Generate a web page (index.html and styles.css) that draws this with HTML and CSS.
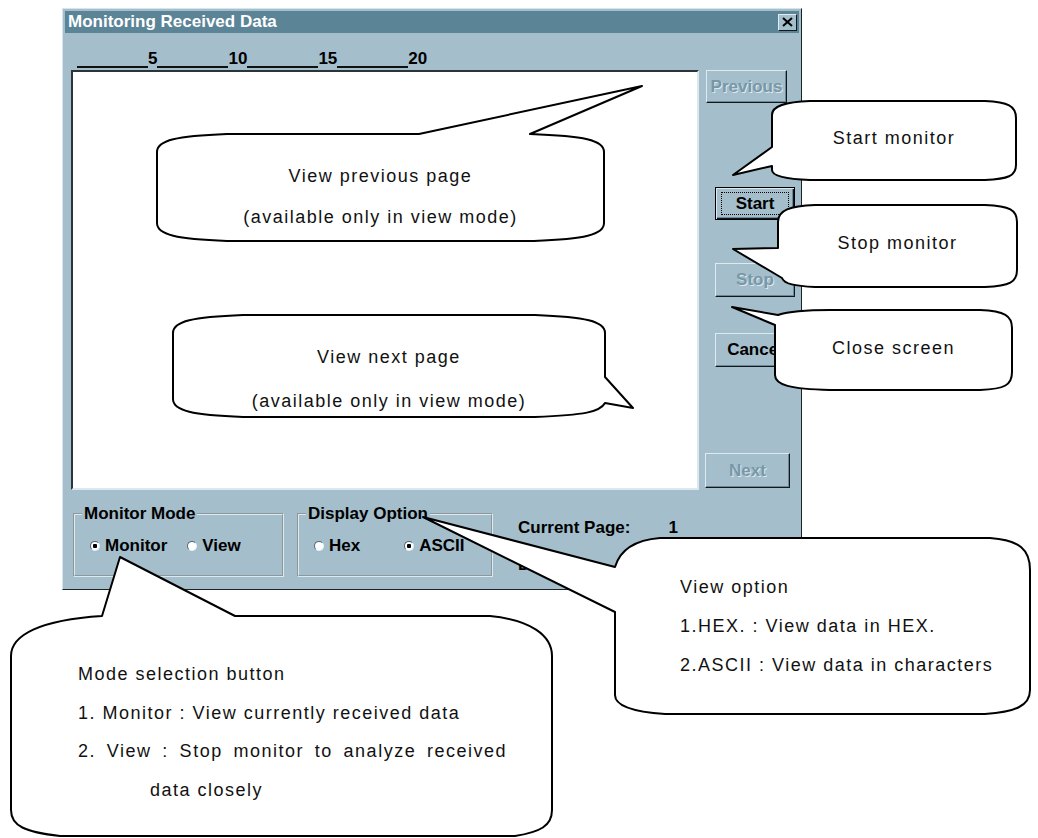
FILE: index.html
```html
<!doctype html>
<html>
<head>
<meta charset="utf-8" />
<title>Monitoring Received Data</title>
<link rel="stylesheet" href="styles.css">
</head>

<body>
<div class="dialog">
	<div class="titlebar">
		<span class="title">Monitoring Received Data</span>
		<span class="close"><svg width="11" height="10" viewBox="0 0 11 10"><path d="M1 1 L10 9 M10 1 L1 9" stroke="#000" stroke-width="2" /></svg></span>
	</div>
	<div class="ruler">
		<span class="seg"></span><b>5</b><span class="seg"></span><b>10</b><span class="seg"></span><b>15</b><span class="seg"></span><b>20</b>
	</div>
	<div class="main">
		<div class="screen"></div>
		<div class="buttons">
			<button class="btn off prev">Previous</button>
			<button class="btn def start"><span class="focus">Start</span></button>
			<button class="btn off stop">Stop</button>
			<button class="btn cancel">Cancel</button>
			<button class="btn off next">Next</button>
		</div>
	</div>
	<div class="bottom">
		<fieldset class="group mode">
			<legend>Monitor Mode</legend>
			<div class="opts">
				<label class="radio"><i class="dot on"></i>Monitor</label>
				<label class="radio view"><i class="dot"></i>View</label>
			</div>
		</fieldset>
		<fieldset class="group display">
			<legend>Display Option</legend>
			<div class="opts">
				<label class="radio"><i class="dot"></i>Hex</label>
				<label class="radio ascii"><i class="dot on"></i>ASCII</label>
			</div>
		</fieldset>
		<div class="pageinfo">
			<div class="row"><span>Current Page:</span><span class="val">1</span></div>
			<div class="row second"><span>Data:</span></div>
		</div>
	</div>
</div>

<!-- callout balloons over the dialog -->
<svg class="balloons" width="1038" height="838" viewBox="0 0 1038 838">
	<path d="M 227 134 L 419 134 L 642 86 L 530 134 C 584 136 604 140 604 152 L 604 223 C 604 235 584 239 534 241 L 227 241 C 177 239 157 235 157 223 L 157 152 C 157 140 177 136 227 134 Z" />
	<path d="M 243 315 L 535 315 C 585 317 605 321 605 333 L 605 377 L 633 408 L 605 403 C 600 412 585 415 535 417 L 243 417 C 193 415 173 411 173 399 L 173 333 C 173 321 193 317 243 315 Z" />
	<path d="M 810 101 L 985 101 C 1008 102 1016 106 1016 118 L 1016 165 C 1016 176 1008 179 985 180 L 810 180 C 785 179 772 176 772 170 L 772 166 L 733 175 L 772 147 L 772 115 C 772 106 785 102 810 101 Z" />
	<path d="M 815 205 L 985 205 C 1010 206 1017 210 1017 222 L 1017 270 C 1017 282 1010 286 985 287 L 815 287 C 795 286 784 284 782 278 L 733 249 L 778 248 L 778 222 C 778 210 790 206 815 205 Z" />
	<path d="M 830 310 L 980 310 C 1005 311 1012 316 1012 328 L 1012 372 C 1012 385 1005 389 980 390 L 830 390 C 790 389 775 385 775 375 L 775 325 L 732 307 L 778 315 C 790 311 805 310 830 310 Z" />
	<path d="M 660 538 L 990 538 C 1020 540 1030 550 1030 570 L 1030 690 C 1030 706 1015 712 985 714 L 665 714 C 635 712 615 706 615 695 L 615 612 L 423 517 L 615 567 C 620 550 635 540 660 538 Z" />
	<path d="M 102 616 L 120 557 L 235 616 L 490 616 C 530 620 552 635 552 656 L 552 810 C 552 826 540 832 515 836 L 60 836 C 25 832 11 826 11 810 L 11 656 C 11 635 40 620 102 616 Z" />
</svg>

<div class="note center n-prev">View previous page<br />(available only in view mode)</div>
<div class="note center n-next">View next page<br />(available only in view mode)</div>
<div class="note center n-start">Start monitor</div>
<div class="note center n-stop">Stop monitor</div>
<div class="note center n-close">Close screen</div>
<div class="note n-option">View option<br />1.HEX. : View data in HEX.<br />2.ASCII : View data in characters</div>
<div class="note n-mode">
	<div>Mode selection button</div>
	<div>1. Monitor : View currently received data</div>
	<div class="just">2. View : Stop monitor to analyze received</div>
	<div class="indent">data closely</div>
</div>
</body>
</html>
```

FILE: styles.css
```css
body { margin:0; background:#fff; width:1038px; height:838px; overflow:hidden; position:relative; }

.dialog { width:740px; height:582px; margin:8px 0 0 62px; box-sizing:border-box; padding:2px; background:#a4becb; border:1px solid; border-color:#d6e4ec #1b2327 #1b2327 #d6e4ec; font:bold 17px 'Liberation Sans', Arial, sans-serif; color:#000; display:flex; flex-direction:column; }
.titlebar { height:22px; flex:none; background:#5b8497; display:flex; align-items:center; justify-content:space-between; padding:0 2px 0 3px; }
.title { color:#fff; }
.close { width:19px; height:17px; box-sizing:border-box; background:#a4becb; border:1px solid; border-color:#e0ebf1 #10181c #10181c #e0ebf1; display:flex; align-items:center; justify-content:center; }

.ruler { height:37px; flex:none; box-sizing:border-box; display:flex; align-items:flex-end; padding:0 0 2px 12px; line-height:18px; }
.ruler b { font-weight:bold; }
.seg { width:71px; height:16px; border-bottom:2px solid #111; box-sizing:border-box; }

.main { display:flex; height:420px; flex:none; }
.screen { width:628px; height:420px; margin-left:6px; box-sizing:border-box; background:#fff; border:2px solid; border-color:#2b3539 #dbe8ef #dbe8ef #2b3539; }
.buttons { display:flex; flex-direction:column; align-items:flex-start; }

.btn { box-sizing:border-box; padding:0; background:#a4becb; font:bold 17px 'Liberation Sans', Arial, sans-serif; color:#000; border:1px solid; border-color:#dfeaf0 #10181c #10181c #dfeaf0; box-shadow:inset -1px -1px 0 #6d8796; display:flex; align-items:center; justify-content:center; }
.btn.off { color:#7897a8; text-shadow:1px 1px 0 #dce9ef; }
.btn.def { border-color:#000; box-shadow:inset 1px 1px 0 #dfeaf0, inset -1px -1px 0 #10181c, inset -2px -2px 0 #6d8796; }
.focus { display:flex; align-items:center; justify-content:center; width:66px; height:21px; border:1px dotted #000; }
.prev { margin:0 0 0 7px; width:81px; height:33px; }
.start { margin:84px 0 0 16px; width:80px; height:33px; }
.stop { margin:43px 0 0 16px; width:80px; height:34px; }
.cancel { margin:36px 0 0 16px; width:80px; height:34px; }
.next { margin:86px 0 0 6px; width:85px; height:35px; }

.bottom { display:flex; align-items:flex-start; padding-left:8px; }
.group { margin:14px 0 0; padding:0 0 0 15px; box-sizing:border-box; height:73px; border:2px groove #dce9ef; min-width:0; }
.group legend { margin-left:-8px; padding:0 2px; line-height:20px; }
.mode { width:211px; }
.display { width:196px; margin-left:13px; }
.opts { display:flex; align-items:center; margin-top:12px; }
.radio { display:flex; align-items:center; gap:5px; line-height:20px; }
.dot { width:10px; height:10px; box-sizing:border-box; border-radius:50%; background:#fff; border:1px solid; border-color:#4d6774 #e7f0f5 #e7f0f5 #4d6774; }
.dot.on { background:radial-gradient(circle, #000 0 2px, #fff 2.5px); }
.view { margin-left:20px; }
.ascii { margin-left:44px; }

.pageinfo { margin:28px 0 0 25px; line-height:20px; }
.row { display:flex; }
.val { margin-left:38px; }
.second { margin-top:17px; }

.balloons { position:absolute; left:0; top:0; }
.balloons path { fill:#fff; stroke:#000; stroke-width:2; stroke-linejoin:round; }

.note { position:absolute; font:18px/40px 'Liberation Sans', Arial, sans-serif; letter-spacing:1.5px; color:#111; }
.note.center { text-align:center; }
.n-prev { left:157px; width:447px; top:156px; line-height:41px; }
.n-next { left:173px; width:432px; top:335px; line-height:44px; }
.n-start { left:772px; width:244px; top:118px; }
.n-stop { left:778px; width:239px; top:223px; }
.n-close { left:775px; width:237px; top:328px; }
.n-option { left:680px; top:568px; line-height:39px; }
.n-mode { left:78px; width:429px; top:655px; line-height:38.5px; }
.just { text-align:justify; text-align-last:justify; }
.indent { padding-left:72px; }
```
